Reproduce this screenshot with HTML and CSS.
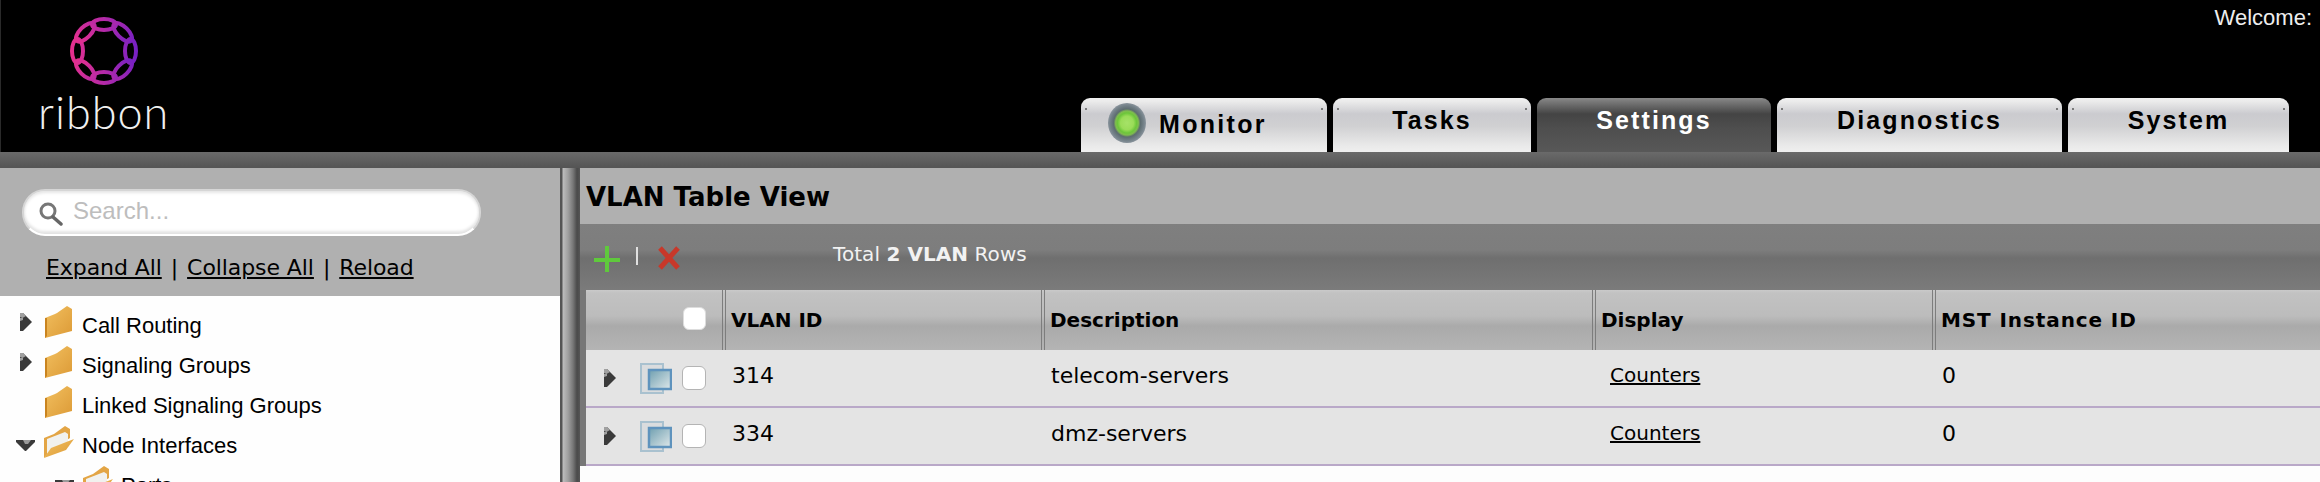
FILE: index.html
```html
<!DOCTYPE html>
<html lang="en">
<head>
<meta charset="utf-8">
<title>VLAN Table View</title>
<link rel="stylesheet" href="styles.css">
</head>
<body>
<svg class="defs" width="0" height="0" aria-hidden="true">
  <defs>
    <linearGradient id="ringGrad" gradientUnits="userSpaceOnUse" x1="4" y1="38" x2="72" y2="38">
      <stop offset="0" stop-color="#e8308c"/>
      <stop offset="0.5" stop-color="#b42aa8"/>
      <stop offset="1" stop-color="#7420c4"/>
    </linearGradient>
    <linearGradient id="folderGrad" x1="0" y1="0" x2="1" y2="1">
      <stop offset="0" stop-color="#f2c060"/>
      <stop offset="1" stop-color="#dc9a36"/>
    </linearGradient>
    <linearGradient id="winGrad" x1="0" y1="0" x2="1" y2="1">
      <stop offset="0" stop-color="#6f9fb0"/>
      <stop offset="1" stop-color="#dfe8ea"/>
    </linearGradient>
    <symbol id="arrowRight" viewBox="0 0 14 20">
      <path d="M1 1 L4 1 L13 10 L4 19 L1 19 Z" fill="#3a3a3a"/>
      <path d="M1 1 L4 1 L7 4 L3.500 6 L1 5 Z M1 9 L4 8 L4 6 L1 6 Z" fill="#a0a0a0"/>
    </symbol>
    <symbol id="arrowDown" viewBox="0 0 19 13">
      <path d="M0 1 L19 1 L19 3 L10 12 L9 12 L0 3 Z" fill="#3a3a3a"/>
      <path d="M7 1 L15 1 L12 5 L9 5 Z" fill="#9a9a9a"/>
    </symbol>
    <symbol id="folderClosed" viewBox="0 0 31 32">
      <path d="M2 32 L2 12 L12 8 L14 7 L24 0 L29 3 L29 25 Z" fill="url(#folderGrad)"/>
      <path d="M2 32 L2 12 L4 12 L4 30 Z" fill="#c98420"/>
    </symbol>
    <symbol id="folderOpen" viewBox="0 0 31 32">
      <path d="M1 32 L1 12 L11 8 L22 0 L27 3 L27 12 L8 24 Z" fill="#e3a545"/>
      <path d="M4 28 L4 13 L22 6 L25 8 L25 17 Z" fill="#f1f1ee"/>
      <path d="M1 32 L8 22 L31 13 L23 24 Z" fill="url(#folderGrad)"/>
    </symbol>
    <symbol id="viewIcon" viewBox="0 0 32 31">
      <rect x="1" y="1" width="22" height="29" fill="#dadcde" stroke="#a9c1cf" stroke-width="2"/>
      <rect x="9" y="7" width="22" height="19" fill="url(#winGrad)" stroke="#5f93bd" stroke-width="2.500"/>
    </symbol>
  </defs>
</svg>

<header class="topbar">
  <div class="logo">
    <svg class="logo-ring" width="76" height="76" viewBox="0 0 76 76" aria-hidden="true">
      <g class="ring-links" fill="none" stroke="url(#ringGrad)" stroke-width="4">
        <ellipse cx="38" cy="11.500" rx="12" ry="5.500"/>
        <ellipse cx="56.700" cy="19.300" rx="12" ry="5.500" transform="rotate(45 56.700 19.300)"/>
        <ellipse cx="64.500" cy="38" rx="5.500" ry="12"/>
        <ellipse cx="56.700" cy="56.700" rx="12" ry="5.500" transform="rotate(-45 56.700 56.700)"/>
        <ellipse cx="38" cy="64.500" rx="12" ry="5.500"/>
        <ellipse cx="19.300" cy="56.700" rx="12" ry="5.500" transform="rotate(45 19.300 56.700)"/>
        <ellipse cx="11.500" cy="38" rx="5.500" ry="12"/>
        <ellipse cx="19.300" cy="19.300" rx="12" ry="5.500" transform="rotate(-45 19.300 19.300)"/>
      </g>
    </svg>
    <span class="logo-word">ribbon</span>
  </div>
  <div class="top-right">
    <div class="welcome">Welcome:</div>
    <nav class="tabs">
      <a class="tab tab-monitor"><span class="led"></span><span class="tab-label">Monitor</span></a>
      <a class="tab tab-tasks"><span class="tab-label">Tasks</span></a>
      <a class="tab tab-settings active"><span class="tab-label">Settings</span></a>
      <a class="tab tab-diag"><span class="tab-label">Diagnostics</span></a>
      <a class="tab tab-system"><span class="tab-label">System</span></a>
    </nav>
  </div>
</header>
<div class="strip"></div>

<main class="workspace">
  <aside class="sidebar">
    <div class="side-head">
      <div class="search">
        <svg class="search-icon" width="26" height="24" viewBox="0 0 26 24" aria-hidden="true">
          <circle cx="10" cy="9" r="7" fill="none" stroke="#777" stroke-width="3"/>
          <path d="M15 15 L23 22" stroke="#666" stroke-width="3.500" stroke-linecap="round"/>
        </svg>
        <span class="search-hint">Search...</span>
      </div>
      <div class="tree-links">
        <a>Expand All</a><span class="pipe">|</span><a>Collapse All</a><span class="pipe">|</span><a>Reload</a>
      </div>
    </div>
    <ul class="tree">
      <li class="tree-row"><svg class="tw"><use href="#arrowRight"/></svg><svg class="fold"><use href="#folderClosed"/></svg><span>Call Routing</span></li>
      <li class="tree-row"><svg class="tw"><use href="#arrowRight"/></svg><svg class="fold"><use href="#folderClosed"/></svg><span>Signaling Groups</span></li>
      <li class="tree-row"><span class="tw"></span><svg class="fold"><use href="#folderClosed"/></svg><span>Linked Signaling Groups</span></li>
      <li class="tree-row"><svg class="tw-open"><use href="#arrowDown"/></svg><svg class="fold"><use href="#folderOpen"/></svg><span>Node Interfaces</span></li>
      <li class="tree-row nested"><svg class="tw-open"><use href="#arrowDown"/></svg><svg class="fold"><use href="#folderOpen"/></svg><span>Ports</span></li>
    </ul>
  </aside>
  <div class="splitter"></div>
  <section class="content">
    <h1 class="page-title">VLAN Table View</h1>
    <div class="toolbar">
      <svg class="tool-add" width="28" height="28" viewBox="0 0 28 28" aria-hidden="true">
        <path d="M14 1 V27 M1 15 H27" stroke="#5fc93c" stroke-width="4"/>
      </svg>
      <span class="tool-sep"></span>
      <svg class="tool-del" width="24" height="24" viewBox="0 0 24 24" aria-hidden="true">
        <path d="M3 2 L21 22 M21 2 L3 22" stroke="#c8382a" stroke-width="5"/>
      </svg>
      <span class="tool-total">Total <b>2 VLAN</b> Rows</span>
    </div>
    <div class="grid-wrap">
      <table class="grid">
        <colgroup>
          <col class="c1"><col class="c2"><col class="c3"><col class="c4"><col class="c5">
        </colgroup>
        <thead>
          <tr>
            <th class="th-check"><span class="check head-check"></span></th>
            <th>VLAN ID</th>
            <th>Description</th>
            <th>Display</th>
            <th class="th-mst">MST Instance ID</th>
          </tr>
        </thead>
        <tbody>
          <tr>
            <td><div class="row-tools"><svg class="row-tw"><use href="#arrowRight"/></svg><svg class="row-view"><use href="#viewIcon"/></svg><span class="check"></span></div></td>
            <td>314</td>
            <td>telecom-servers</td>
            <td class="link-cell"><a>Counters</a></td>
            <td>0</td>
          </tr>
          <tr>
            <td><div class="row-tools"><svg class="row-tw"><use href="#arrowRight"/></svg><svg class="row-view"><use href="#viewIcon"/></svg><span class="check"></span></div></td>
            <td>334</td>
            <td>dmz-servers</td>
            <td class="link-cell"><a>Counters</a></td>
            <td>0</td>
          </tr>
        </tbody>
      </table>
    </div>
    <div class="blank"></div>
  </section>
</main>
</body>
</html>
```
FILE: styles.css
```css
* { box-sizing: border-box; }
html, body { margin: 0; height: 100%; overflow: hidden; }
body {
  display: flex;
  flex-direction: column;
  background: #000;
  font-family: "Liberation Sans", Arial, sans-serif;
  color: #000;
}
.defs { position: absolute; }

/* top bar */
.topbar {
  height: 152px;
  flex: none;
  display: flex;
  justify-content: space-between;
  background: #000;
  border-left: 1px solid #2a2a2a;
}
.logo {
  width: 200px;
  padding-left: 38px;
  display: flex;
  flex-direction: column;
}
.logo-ring { margin: 13px 0 0 27px; display: block; flex: none; }
.ring-links { filter: blur(0.6px); }
.logo-word {
  font-family: Lato, "Open Sans", sans-serif;
  font-weight: 300;
  font-size: 45px;
  line-height: 40px;
  letter-spacing: 1px;
  color: #f0f0f0;
  margin-top: 3px;
  margin-left: -1px;
}
.top-right { display: flex; flex-direction: column; justify-content: space-between; align-items: flex-end; }
.welcome {
  font-size: 22px;
  line-height: 26px;
  color: #eee;
  padding: 5px 8px 0 0;
}
.tabs { display: flex; gap: 6px; padding-right: 31px; }
.tab {
  height: 54px;
  border-radius: 9px 9px 0 0;
  display: flex;
  justify-content: center;
  font-size: 25px;
  font-weight: bold;
  letter-spacing: 2.100px;
  color: #000;
  background-color: #ddd;
  background-image:
    radial-gradient(circle at 5px 11px, #777 0, #777 0.7px, transparent 1px),
    radial-gradient(circle at calc(100% - 5px) 11px, #777 0, #777 0.7px, transparent 1px),
    linear-gradient(#f0f0f0 0, #ececec 3px, #cbcbcf 16px, #d0d0d2 28px, #eaeaea 48px, #efefef 100%);
}
.tab-label { line-height: 28px; padding-top: 8px; }
.tab-monitor { width: 246px; padding-left: 27px; justify-content: flex-start; }
.tab-monitor .tab-label { padding-top: 12px; margin-left: 2px; letter-spacing: 2.300px; }
.tab-tasks { width: 198px; }
.tab-settings { width: 234px; }
.tab-diag { width: 285px; }
.tab-system { width: 221px; }
.tab.active {
  color: #fff;
  background-image: linear-gradient(#888 0, #444 16px, #4e4e4e 30px, #585858 100%);
}
.led {
  width: 38px;
  height: 40px;
  margin-top: 5px;
  margin-right: 11px;
  flex: none;
  border-radius: 50%;
  background: radial-gradient(closest-side, #a6e268 0, #9adc58 34%, #6cc63a 50%, #7fbd4e 60%, #5d6c70 70%, #77848c 90%, #8a949c 100%);
}

.strip {
  height: 16px;
  flex: none;
  background: linear-gradient(#6a6a6a, #545454);
}

/* main */
.workspace { flex: 1; display: flex; min-height: 0; background: #fff; }
.sidebar { width: 560px; flex: none; background: #fefefe; overflow: hidden; }
.side-head { height: 128px; background: #b0b0b0; padding: 21px 0 0 22px; }
.search {
  width: 459px;
  height: 47px;
  border-radius: 23px;
  background: #fff;
  border: 2px solid #d6d6d6;
  border-bottom-color: #fff;
  box-shadow: inset 0 2px 3px #e6e6e6, inset 0 -3px 3px #e4e4e4;
  display: flex;
  align-items: center;
  padding-left: 14px;
}
.search-icon { flex: none; margin-top: 3px; }
.search-hint { font-size: 24px; color: #bdbdbd; margin: -4px 0 0 9px; }
.tree-links {
  font-family: "DejaVu Sans", sans-serif;
  font-size: 22px;
  line-height: 28px;
  letter-spacing: -0.080px;
  padding: 18px 0 0 24px;
  display: flex;
}
.tree-links a { text-decoration: underline; }
.pipe { margin: 0 9px; }

.tree { list-style: none; margin: 0; padding: 6px 0 0; font-size: 22px; }
.tree-row { height: 40px; display: flex; align-items: center; padding-left: 16px; }
.tree-row span:last-child { padding-top: 7px; }
.tree-row.nested { padding-left: 55px; }
.tw { width: 14px; height: 20px; margin: 0 10px 0 3px; flex: none; }
.tw-open { width: 19px; height: 13px; margin: 6px 8px 0 0; flex: none; }
.fold { width: 31px; height: 32px; flex: none; margin-right: 8px; }

.splitter {
  width: 20px;
  flex: none;
  background: linear-gradient(90deg, #555 0, #555 2px, #bdbdbd 3px, #a0a0a0 8px, #777 13px, #4a4a4a 17px, #555 100%);
}

/* content */
.content { flex: 1; display: flex; flex-direction: column; min-width: 0; }
.page-title {
  height: 56px;
  flex: none;
  margin: 0;
  padding: 14px 0 0 6px;
  background: #b0b0b0;
  font-family: "DejaVu Sans", sans-serif;
  font-size: 26px;
  line-height: 30px;
}
.toolbar {
  height: 66px;
  flex: none;
  display: flex;
  align-items: flex-start;
  padding-left: 13px;
  background: linear-gradient(#7f7f7f 0, #7d7d7d 26px, #6f6f6f 34px, #747474 48px, #7b7b7b 100%);
}
.tool-add { margin-top: 21px; flex: none; }
.tool-sep { width: 2px; height: 18px; background: #e0e0e0; margin: 23px 19px 0 15px; flex: none; }
.tool-del { margin-top: 22px; flex: none; }
.tool-total {
  font-family: "DejaVu Sans", sans-serif;
  font-size: 20px;
  line-height: 24px;
  letter-spacing: 0.060px;
  color: #f2f2f2;
  margin: 18px 0 0 152px;
}
.grid-wrap { flex: none; padding-left: 6px; background: #777; }
.grid {
  width: 100%;
  table-layout: fixed;
  border-collapse: separate;
  border-spacing: 0;
  font-family: "DejaVu Sans", sans-serif;
}
.c1 { width: 140px; }
.c2 { width: 319px; }
.c3 { width: 551px; }
.c4 { width: 340px; }
.grid th {
  height: 60px;
  padding: 0 0 0 5px;
  text-align: left;
  font-size: 20px;
  border-right: 4px double #7d7d7d;
  background: linear-gradient(#cacaca 0, #c2c2c2 3px, #bcbcbc 26px, #aaaaaa 36px, #b4b4b4 100%);
}
.grid th.th-mst { border-right: 0; letter-spacing: 0.900px; }
.grid th.th-check { padding: 0 16px 0 0; text-align: right; }
.check {
  display: inline-block;
  width: 24px;
  height: 24px;
  background: #fff;
  border: 1px solid #b4b4b4;
  border-radius: 6px;
  flex: none;
}
.head-check { width: 23px; height: 23px; border-color: #ddd; vertical-align: -2px; }
.grid td {
  height: 58px;
  padding: 0 0 6px 6px;
  font-size: 22px;
  background: #e4e4e4;
  border-bottom: 2px solid #b9a8c8;
}
.grid td:first-child { padding: 0 0 0 17px; }
.grid td.link-cell { padding-left: 14px; font-size: 20px; }
.link-cell a { text-decoration: underline; }
.row-tools { display: flex; align-items: center; }
.row-tw { width: 14px; height: 20px; flex: none; margin-right: 23px; }
.row-view { width: 32px; height: 31px; flex: none; margin-right: 10px; }
.blank { flex: 1; background: #fdfdfd; }
```
